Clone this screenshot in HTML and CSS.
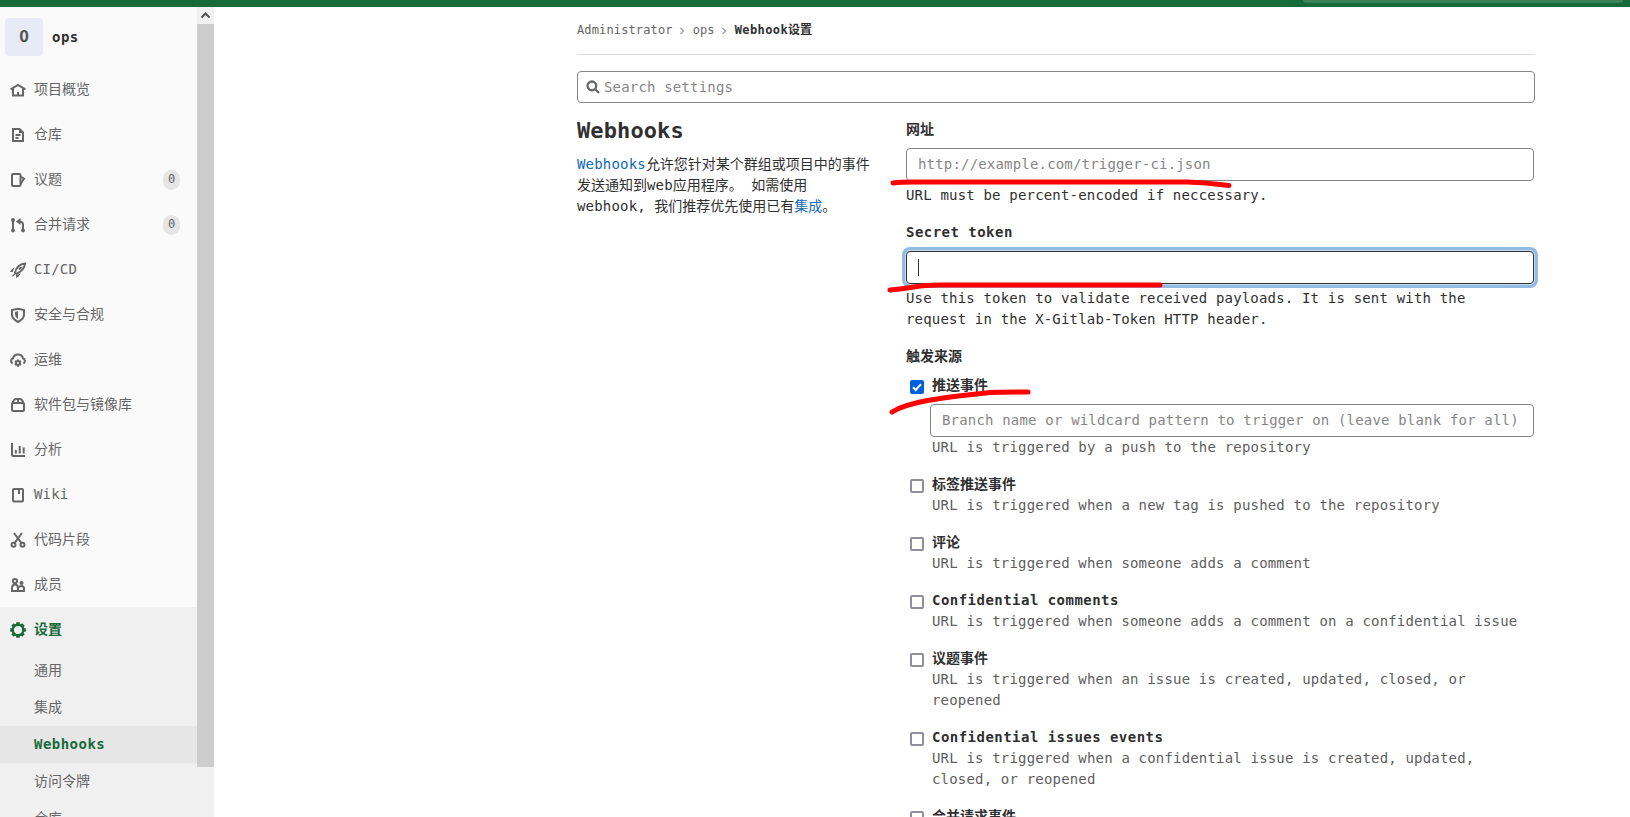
FILE: index.html
```html
<!DOCTYPE html>
<html lang="zh-CN">
<head>
<meta charset="utf-8">
<title>Webhook设置 · ops</title>
<link rel="stylesheet" href="styles.css">
</head>
<body>
<header class="topbar"><div class="topbar-search"></div></header>
<div class="page">
  <aside class="sidebar">
    <nav class="nav">
      <div class="project"><span class="avatar">O</span><b class="strong project-name">ops</b></div>
      <a class="item"><svg class="icon" viewBox="0 0 16 16"><path d="M.6 7.300 8 2.800l7.400 4.500M3 6.500V13.500h10V6.500M8 10v3.500"/></svg><span>项目概览</span></a>
      <a class="item"><svg class="icon" viewBox="0 0 16 16"><path d="M3 2h6.500L13 5.500V14H3zM5.500 8h5M5.500 11h3"/><path class="fill" d="M9 2v4h4z"/></svg><span>仓库</span></a>
      <a class="item"><svg class="icon" viewBox="0 0 16 16"><rect x="2" y="2" width="8.500" height="12" rx="1"/><path d="M10.500 4.500 14 6.500l-3.500 5.500"/></svg><span>议题</span><span class="badge">0</span></a>
      <a class="item"><svg class="icon" viewBox="0 0 16 16"><path d="M3 3v11M13 14V7.500Q13 4.500 9 4.500"/><path class="fill" d="M6 4.500 10.500 1v7z"/><circle class="fill" cx="3" cy="3" r="2"/><circle class="fill" cx="3" cy="13.500" r="1.900"/><circle class="fill" cx="13" cy="13.500" r="1.900"/></svg><span>合并请求</span><span class="badge">0</span></a>
      <a class="item latin"><svg class="icon" viewBox="0 0 16 16"><path d="M5 10.800C6 6 9 2 15 1.500 14.500 7 10.500 10 6.500 11.800zM9 7.500l2.500-2.500"/><path class="fill" d="M4.500 5 1.500 7.500 0 10h2.800zM11 11.500 8.500 14.500 6 16v-3zM4 12l-2.500 2.500 2.200-.2L5.500 12z"/></svg><span>CI/CD</span></a>
      <a class="item"><svg class="icon" viewBox="0 0 16 16"><path d="M8 1.700 14 3v5q0 3.700-6 7-6-3.300-6-7V3z"/><path class="fill" d="M8 4v8Q5 10 5 7.500V5z"/></svg><span>安全与合规</span></a>
      <a class="item"><svg class="icon" viewBox="0 0 16 16"><path d="M2.700 11.500A2.900 2.900 0 0 1 3 6.200 5.200 5.200 0 0 1 13 6.200 2.900 2.900 0 0 1 13.300 11.500"/><circle cx="8" cy="11" r="2"/><path d="M8 7.500v1.500M8 13v1.700M4.900 9.200l1.400.8M9.700 12l1.400.8M11.100 9.200 9.700 10M6.300 12l-1.400.8"/></svg><span>运维</span></a>
      <a class="item"><svg class="icon" viewBox="0 0 16 16"><rect x="2" y="6" width="12" height="8" rx="1"/><path d="M2.500 6Q4 2 6 2h4q2 0 3.500 4"/><path class="fill" d="M7 2h2v3H7z"/></svg><span>软件包与镜像库</span></a>
      <a class="item"><svg class="icon" viewBox="0 0 16 16"><path d="M2 1v11.500Q2 14 3.500 14H15M5.800 8v3.500M9.700 4v7.500M13.700 5.500v6"/></svg><span>分析</span></a>
      <a class="item latin"><svg class="icon" viewBox="0 0 16 16"><rect x="3" y="2" width="10" height="12.500" rx="1"/><path d="M9 2v5"/></svg><span>Wiki</span></a>
      <a class="item"><svg class="icon" viewBox="0 0 16 16"><circle cx="3.500" cy="12.800" r="2"/><circle cx="12.500" cy="12.800" r="2"/><path d="M4.500 11.200 12 1M11.500 11.200 4 1"/></svg><span>代码片段</span></a>
      <a class="item"><svg class="icon" viewBox="0 0 16 16"><circle cx="5" cy="4" r="2.100"/><path d="M2 14v-3q0-3.500 3-3.500T8 11v3zM8.500 14H14v-2.500Q14 9 11.500 9 9.500 9 9 10.500"/><circle class="fill" cx="11.500" cy="6" r="2"/></svg><span>成员</span></a>
      <div class="section">
        <a class="item current"><svg class="icon" viewBox="0 0 16 16"><circle class="ring" cx="8" cy="8" r="5.300"/><path class="teeth" d="M8 .2v2.500M8 13.300v2.500M.2 8h2.500M13.300 8h2.500M2.500 2.500l1.800 1.800M11.700 11.700l1.800 1.800M13.500 2.500l-1.800 1.800M4.300 11.700l-1.800 1.800"/></svg><span>设置</span></a>
        <a class="sub">通用</a>
        <a class="sub">集成</a>
        <a class="sub active strong">Webhooks</a>
        <a class="sub">访问令牌</a>
        <a class="sub">仓库</a>
      </div>
    </nav>
    <div class="scrollbar">
      <div class="scroll-up"><svg viewBox="0 0 17 17"><path d="M4.500 10.500 8.500 6.500l4 4"/></svg></div>
      <div class="scroll-thumb"></div>
    </div>
  </aside>

  <main class="content">
    <nav class="crumbs"><span>Administrator</span><svg viewBox="0 0 8 8"><path d="M2.500 1 5.500 4l-3 3"/></svg><span>ops</span><svg viewBox="0 0 8 8"><path d="M2.500 1 5.500 4l-3 3"/></svg><b><span class="crumb-strong">Webhook</span>设置</b></nav>
    <div class="search"><svg viewBox="0 0 16 16"><circle cx="6.700" cy="6.700" r="5"/><path d="m10.300 10.300 4.500 4.500"/></svg><span>Search settings</span></div>
    <div class="columns">
      <section class="intro">
        <h1>Webhooks</h1>
        <p><a class="link latin">Webhooks</a>允许您针对某个群组或项目中的事件<br>发送通知到<span class="latin">web</span>应用程序。 如需使用<br><span class="latin">webhook,</span> 我们推荐优先使用已有<a class="link">集成</a>。</p>
      </section>
      <form class="form">
        <label class="label">网址</label>
        <div class="field">http://example.com/trigger-ci.json</div>
        <p class="help">URL must be percent-encoded if neccessary.</p>
        <label class="label strong">Secret token</label>
        <div class="field focused"><span class="caret"></span></div>
        <p class="help">Use this token to validate received payloads. It is sent with the<br>request in the X-Gitlab-Token HTTP header.</p>
        <label class="label triggers">触发来源</label>
        <div class="event push"><span class="check checked"><svg viewBox="0 0 14 14"><path d="m3 7.300 2.700 2.700L11 4.200"/></svg></span><div class="event-body"><b>推送事件</b><div class="field branch">Branch name or wildcard pattern to trigger on (leave blank for all)</div><p>URL is triggered by a push to the repository</p></div></div>
        <div class="event"><span class="check"></span><div class="event-body"><b>标签推送事件</b><p>URL is triggered when a new tag is pushed to the repository</p></div></div>
        <div class="event"><span class="check"></span><div class="event-body"><b>评论</b><p>URL is triggered when someone adds a comment</p></div></div>
        <div class="event"><span class="check"></span><div class="event-body"><b class="strong">Confidential comments</b><p>URL is triggered when someone adds a comment on a confidential issue</p></div></div>
        <div class="event"><span class="check"></span><div class="event-body"><b>议题事件</b><p>URL is triggered when an issue is created, updated, closed, or<br>reopened</p></div></div>
        <div class="event"><span class="check"></span><div class="event-body"><b class="strong">Confidential issues events</b><p>URL is triggered when a confidential issue is created, updated,<br>closed, or reopened</p></div></div>
        <div class="event"><span class="check"></span><div class="event-body"><b>合并请求事件</b></div></div>
      </form>
    </div>
  </main>
</div>
<svg class="marks" viewBox="0 0 1630 817">
  <path d="M893 183Q900 182 915 182H1187Q1205 182.500 1229 185.500"/>
  <path d="M890 290Q902 289 914 287 925 285 940 285H1160"/>
  <path d="M892 412C908 402 938 398 990 392.500Q1000 392 1028 392"/>
</svg>
</body>
</html>
```
FILE: styles.css
```css
* { box-sizing: border-box; }
html, body { height: 100%; overflow: hidden; }
body {
  margin: 0;
  display: flex;
  flex-direction: column;
  background: #fff;
  color: #303030;
  font: 14px/21px "DejaVu Sans Mono", "Noto Sans CJK SC", monospace;
}
p, h1 { margin: 0; }
svg { fill: none; stroke: currentColor; display: block; }

.topbar { flex: none; height: 7px; background: #176b3a; display: flex; justify-content: flex-end; padding-right: 7px; }
.topbar-search { width: 320px; height: 3px; background: #3a8358; border-radius: 0 0 4px 4px; }
.page { flex: 1; min-height: 0; display: flex; }

/* Letter spacing applies to Latin runs only */
.latin, .help, .field, .event-body p { letter-spacing: .18px; }
.strong { letter-spacing: .47px; }

.sidebar { width: 214px; flex: none; display: flex; overflow: hidden; background: #fafafa; }
.nav { width: 197px; flex: none; color: #666; }
.project { height: 60px; display: flex; align-items: flex-start; padding: 11px 0 0 5px; gap: 9px; }
.avatar { width: 38px; height: 38px; border-radius: 4px; background: #e8eaf6; color: #555; font-weight: bold; font-size: 16px; line-height: 37px; text-align: center; }
.project-name { line-height: 38px; color: #303030; }
.item { height: 45px; display: flex; align-items: center; padding: 0 17px 0 10px; gap: 8px; }
.icon { width: 16px; height: 16px; flex: none; stroke-width: 2; }
.icon .fill { fill: currentColor; stroke: none; }
.icon .ring { stroke-width: 2.400; }
.icon .teeth { stroke-width: 3.600; }
.item .badge { margin-left: auto; width: 17px; height: 20px; border-radius: 9px; background: #e5e5e5; font-size: 12px; line-height: 18px; text-align: center; }
.section { background: #f0f0f0; height: 240px; }
.current { color: #176b3a; font-weight: bold; }
.sub { display: block; height: 37px; line-height: 36px; padding-left: 34px; }
.sub.active { background: #e6e6e6; color: #176b3a; font-weight: bold; }
.scrollbar { width: 17px; background: #f0f0f0; }
.scroll-up { height: 17px; background: #f1f1f1; color: #505050; }
.scroll-up svg { width: 17px; height: 17px; stroke-width: 2; }
.scroll-thumb { height: 743px; background: #cdcdcd; }

.content { width: 958px; flex: none; margin-left: 363px; }
.crumbs { height: 48px; display: flex; align-items: center; border-bottom: 1px solid #dbdbdb; padding-bottom: 1px; font-size: 12px; letter-spacing: .13px; color: #666; }
.crumbs svg { width: 8px; height: 8px; margin: 2px 7px 0 5px; color: #999; stroke-width: 1.2; }
.crumbs b { color: #303030; letter-spacing: 0; }
.crumb-strong { letter-spacing: .4px; }
.search { height: 32px; margin-top: 16px; border: 1px solid #868686; border-radius: 4px; display: flex; align-items: center; gap: 5px; padding-left: 8px; color: #868686; letter-spacing: .18px; }
.search svg { width: 14px; height: 14px; color: #666; stroke-width: 2.600; }
.search span { margin-left: -1px; }
.columns { display: flex; }
.intro { width: 329px; flex: none; padding-top: 15px; white-space: nowrap; }
.intro h1 { font-size: 22px; line-height: 26px; letter-spacing: .1px; margin-bottom: 10px; }
.link { color: #1068bf; }

.form { width: 628px; padding-top: 16px; white-space: nowrap; }
.label { display: block; font-weight: bold; }
.field { height: 33px; margin-top: 8px; border: 1px solid #868686; border-radius: 4px; padding: 5px 11px; color: #868686; }
.focused { border-color: #303030; box-shadow: 0 0 0 1px #c5dbf0, 0 0 0 4px #93bce4; padding-top: 7px; }
.caret { display: block; width: 1px; height: 17px; background: #303030; }
.help { margin: 4px 0 16px; }
.triggers { margin-bottom: 8px; }
.event { display: flex; margin-bottom: 16px; padding-left: 4px; gap: 8px; }
.check { width: 14px; height: 14px; flex: none; margin-top: 5px; border: 2px solid #8f8f9d; border-radius: 2px; }
.checked { border: 0; background: #0060df; color: #fff; }
.checked svg { width: 14px; height: 14px; stroke-width: 2; }
.event-body { flex: 1; }
.event-body b { display: block; }
.event-body p { color: #5e5e5e; }
.branch { margin-left: -2px; }

/* Hand-drawn highlights over the form */
.marks { position: absolute; left: 0; top: 0; width: 1630px; height: 817px; color: #f00; stroke-width: 5; stroke-linecap: round; pointer-events: none; }
```
